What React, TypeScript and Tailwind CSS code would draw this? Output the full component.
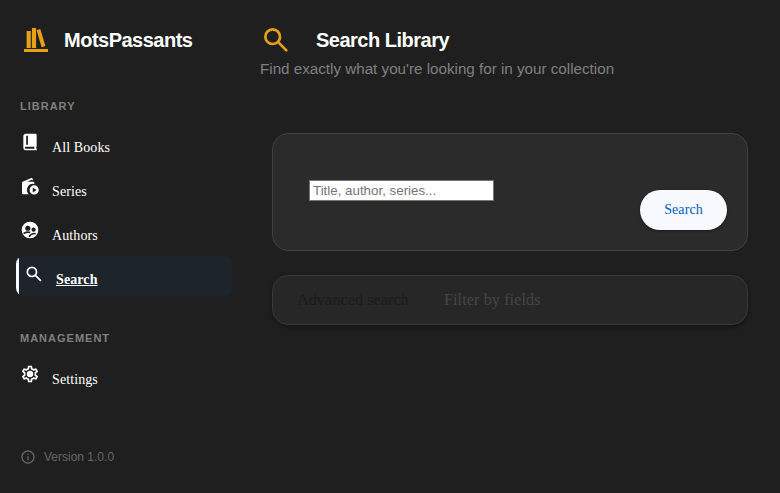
import type { ReactNode } from "react";
import { MdInfoOutline, MdOutlineSettings } from "react-icons/md";

function BooksLogo() {
  return (
    <svg viewBox="0 0 24 24" className="h-6 w-6 shrink-0" fill="#e6a117">
      <path d="M0 21.1h24V24H0zM2.6 3h4.2v17H2.6zM7.9 0h4.2v20H7.9z" />
      <path d="M12.6 2.2 16.3 1.1 21.4 18 17.6 19.3z" />
    </svg>
  );
}

function SearchIcon({ className }: { className: string }) {
  return (
    <svg viewBox="0 -960 960 960" className={className} fill="currentColor">
      <path d="M784-120 532-372q-30 24-69 38t-83 14q-109 0-184.500-75.500T120-580q0-109 75.500-184.500T380-840q109 0 184.500 75.500T640-580q0 44-14 83t-38 69l252 252-56 56ZM380-400q75 0 127.500-52.500T560-580q0-75-52.500-127.500T380-760q-75 0-127.500 52.500T200-580q0 75 52.500 127.500T380-400Z" />
    </svg>
  );
}

function BookIcon() {
  return (
    <svg viewBox="0 0 24 24" className="h-5 w-5" fill="currentColor">
      <path
        fillRule="evenodd"
        d="M7 2H18.300Q20 2 20 3.700V17.300Q18.600 18.400 20 20V22H6.800Q4 22 4 19V5Q4 2 7 2ZM7.400 4.500V15.200H9.500V4.500ZM7 17.600Q5.700 17.600 5.700 18.900T7 20.200H17.400Q16.700 18.900 17.400 17.600Z"
      />
    </svg>
  );
}

function SeriesIcon() {
  return (
    <svg viewBox="0 0 24 24" className="h-5 w-5" fill="currentColor">
      <path d="M2.400 7.200 13.500 2.500Q14.700 2 15.100 3.200L15.700 5.200H15L13.800 4.600 9 6.800H15.600Q17.200 6.800 17.200 8.400V9.600A7.200 7.200 0 0 0 10.600 21.800H3.500Q2.400 21.800 2.400 20.700Z" />
      <path fillRule="evenodd" d="M17 11.200a5.500 5.500 0 1 0 0 11 5.500 5.500 0 0 0 0-11zm-1.700 2.500 4.600 3-4.600 3z" />
    </svg>
  );
}

function AuthorsIcon() {
  return (
    <svg viewBox="0 0 24 24" className="h-5 w-5">
      <circle cx="12" cy="12" r="10" fill="currentColor" />
      <circle cx="9.400" cy="9.900" r="3.100" fill="#1f1f1f" />
      <circle cx="16.300" cy="11.600" r="2.500" fill="#1f1f1f" />
      <path d="M4.300 16.200Q8.500 13.800 12.300 15M11.300 20.500Q11.500 16.400 18.800 16.200" fill="none" stroke="#1f1f1f" strokeWidth="1.900" />
    </svg>
  );
}

function GearIcon() {
  return (
    <span className="relative block h-5 w-5">
      <MdOutlineSettings className="h-5 w-5" />
      <span className="absolute top-[7px] left-[7px] h-1.5 w-1.5 rounded-full bg-white" />
    </span>
  );
}

function NavItem({ icon, label, active = false }: { icon: ReactNode; label: string; active?: boolean }) {
  return (
    <a
      className={
        active
          ? "flex h-10 items-start overflow-hidden rounded-lg bg-[#1e242b] font-bold underline"
          : "flex h-10 items-start rounded-lg pl-1"
      }
    >
      {active && <span className="mr-[5px] h-10 w-[3px] bg-[#f8f8ff]" />}
      <span className="mt-2 h-5 w-5 shrink-0">{icon}</span>
      <span className="ml-3 pt-3.5 leading-5">{label}</span>
    </a>
  );
}

function SectionLabel({ children }: { children: ReactNode }) {
  return (
    <h2 className="pl-1 font-['Liberation_Sans',sans-serif] text-[11px] leading-4 font-bold tracking-[1px] text-[#808080]">
      {children}
    </h2>
  );
}

export default function App() {
  return (
    <div className="flex h-[493px] w-[780px] overflow-hidden bg-[#1f1f1f] font-['Liberation_Serif',serif] text-white">
      <aside className="flex w-60 shrink-0 flex-col pr-2 pl-4">
        <div className="flex h-[98px] items-start gap-4 pt-7 pl-2">
          <BooksLogo />
          <span className="font-['Liberation_Sans',sans-serif] text-xl leading-6 font-bold tracking-[-0.5px]">MotsPassants</span>
        </div>
        <SectionLabel>LIBRARY</SectionLabel>
        <nav className="mt-2.5 flex flex-col gap-1 text-sm tracking-[0.1px]">
          <NavItem icon={<BookIcon />} label="All Books" />
          <NavItem icon={<SeriesIcon />} label="Series" />
          <NavItem icon={<AuthorsIcon />} label="Authors" />
          <NavItem icon={<SearchIcon className="h-5 w-5" />} label="Search" active />
        </nav>
        <div className="mt-[34px]">
          <SectionLabel>MANAGEMENT</SectionLabel>
        </div>
        <nav className="mt-2.5 text-sm tracking-[0.1px]">
          <NavItem icon={<GearIcon />} label="Settings" />
        </nav>
        <footer className="mt-[53px] flex items-center gap-2 pl-1 font-['Liberation_Sans',sans-serif] text-xs leading-4 text-[#666666]">
          <MdInfoOutline className="h-4 w-4" />
          <span>Version 1.0.0</span>
        </footer>
      </aside>
      <main className="flex-1 pr-5 pl-5">
        <header className="h-[133px] pt-6 font-['Liberation_Sans',sans-serif]">
          <div className="flex h-8 items-center gap-6">
            <SearchIcon className="h-8 w-8 text-[#e6a117]" />
            <h1 className="text-xl leading-6 font-bold tracking-[-0.5px]">Search Library</h1>
          </div>
          <p className="mt-0.5 text-[15.2px] leading-[22px] text-[#808080]">
            Find exactly what you're looking for in your collection
          </p>
        </header>
        <section className="mx-3 flex h-[118px] items-start justify-between rounded-2xl border border-[#404040] bg-[#2b2b2b] pr-5 pl-9">
          <input
            placeholder="Title, author, series..."
            className="mt-[46px] h-[21px] w-[185px] border border-[#767676] bg-white px-[3px] font-['Liberation_Sans',sans-serif] text-[13.333px] text-black placeholder:text-[#757575]"
          />
          <button className="mt-14 h-10 w-[87px] rounded-full bg-[#f8f8ff] text-sm tracking-[0.1px] text-[#005fb8] shadow-[0_1px_3px_rgba(0,0,0,0.4)]">
            Search
          </button>
        </section>
        <section className="mx-3 mt-6 flex h-[50px] items-center gap-[35px] rounded-2xl border border-[#383838] bg-[#272727] px-6 text-base tracking-[0.15px] shadow-[0_2px_4px_rgba(0,0,0,0.35)]">
          <span className="text-[#1b1c1f]">Advanced search</span>
          <span className="text-[#43464b]">Filter by fields</span>
        </section>
      </main>
    </div>
  );
}
